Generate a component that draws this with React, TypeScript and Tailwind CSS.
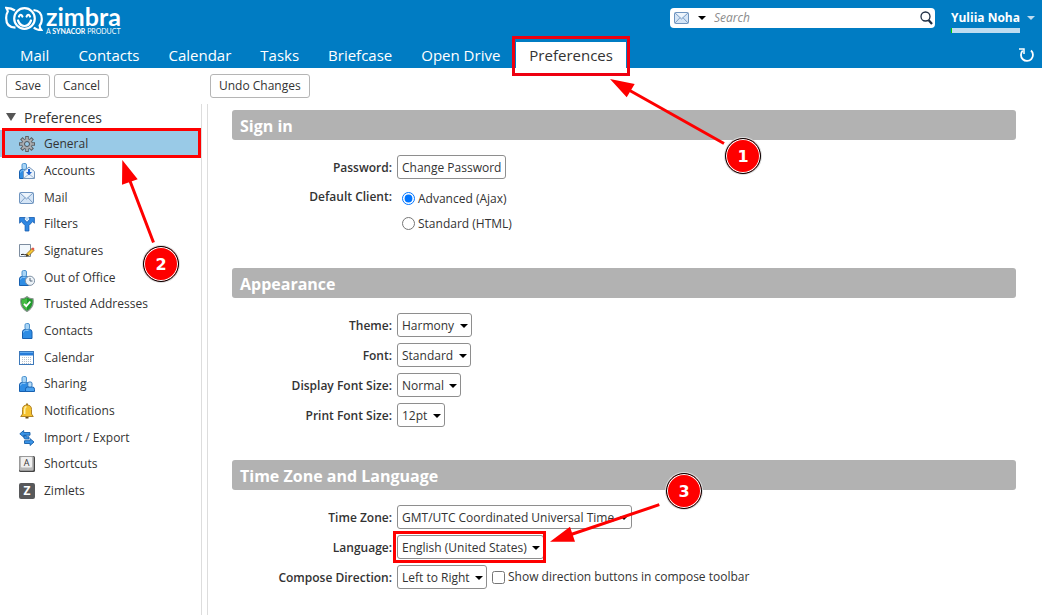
import type { ReactNode } from "react";

/* Icons ----------------------------------------------------------------- */

const iconBase = {
  viewBox: "0 0 16 16",
  className: "size-4 shrink-0",
  "aria-hidden": true,
};

const Caret = ({ className }: { className: string }) => (
  <svg viewBox="0 0 8 4" preserveAspectRatio="none" className={className} fill="currentColor" aria-hidden>
    <path d="M0 0h8L4 4Z" />
  </svg>
);

const Gear = () => (
  <svg {...iconBase}>
    <g stroke="#5d6166" strokeWidth="3.600">
      <path d="M8 0v16M0 8h16M2.300 2.300l11.400 11.400M13.700 2.300 2.300 13.700" />
    </g>
    <circle cx="8" cy="8" r="5.600" fill="#5d6166" />
    <g stroke="#b0b3b7" strokeWidth="1.700">
      <path d="M8 1v14M1 8h14M3.100 3.100l9.800 9.800M12.900 3.100l-9.800 9.800" />
    </g>
    <circle cx="8" cy="8" r="4.800" fill="#a9acb0" />
    <circle cx="8" cy="8" r="2.500" fill="#9acae7" stroke="#4f5358" />
  </svg>
);

const Person = ({ x = 0 }: { x?: number }) => (
  <g transform={`translate(${x} 0)`}>
    <path d="M.5 15.500V9q0-2.500 2.500-2.500h4.500Q10 6.500 10 9v6.500Z" fill="#2f8de4" stroke="#1760b0" />
    <path d="M1.500 9.500q0-2 2-2h3" fill="none" stroke="#82c1f7" />
    <rect x="3" y=".5" width="4.500" height="6" rx="1.500" fill="#a9d5f6" stroke="#4e94d0" />
  </g>
);

const Accounts = () => (
  <svg {...iconBase}>
    <Person />
    <path d="M4.500 8.500 10 4l5.500 4.500v7h-11Z" fill="#e9f2fb" stroke="#7596bb" />
    <path d="m5 15 5-4 5 4" fill="none" stroke="#9bb5d2" />
    <path d="M9 6h2v3h2l-3 3.300L7 9h2Z" fill="#1d62cf" />
  </svg>
);

const Envelope = () => (
  <svg {...iconBase}>
    <rect x=".5" y="2.500" width="14" height="11" rx="1" fill="#d5e5f6" stroke="#6f94bf" />
    <path d="m1 3 6.500 6L14 3M1 13l5-5.300M14 13 9 7.700" fill="none" stroke="#7d9fc6" />
    <path d="M2.200 3h10.600L7.500 7.800Z" fill="#eef5fc" />
  </svg>
);

const Filters = () => (
  <svg {...iconBase}>
    <path
      d="M.6 1.500h5.600L4.900 3 8 6.300 11.100 3 9.800 1.500h5.600v5.700L13.700 5.500 9.900 9.500V15H6.100V9.500L2.300 5.500.6 7.200Z"
      fill="#2f87e2"
      stroke="#145bae"
      strokeWidth=".8"
    />
    <path d="M8 .8 10 2.800 8 4.800 6 2.800Z" fill="#b5d8f7" />
  </svg>
);

const Signatures = () => (
  <svg {...iconBase}>
    <path d="M.5 1.500h11v12H.5Z" fill="#f2f8fd" stroke="#7d8da0" />
    <path d="M2 12q1.300-2 2 0 .8-1.500 1.500-.3h3" fill="none" stroke="#222" />
    <path d="m8 10.500 5-5 2 2-5 5-2.700.7Z" fill="#f6c935" stroke="#876116" strokeWidth=".8" />
    <path d="m12.300 5.700 1-1q.8-.5 1.600.3t.3 1.700l-1 1Z" fill="#e2574a" />
    <path d="m7 13.500 1-2.500 1.500 1.500Z" fill="#333" />
  </svg>
);

const OutOfOffice = () => (
  <svg {...iconBase}>
    <Person />
    <circle cx="11" cy="10.800" r="4.600" fill="#edf3f8" stroke="#8193a6" />
    <path d="M11 8v3h2.500" fill="none" stroke="#55677a" />
  </svg>
);

const Shield = () => (
  <svg {...iconBase}>
    <path d="M8 .6q2 2 6 2.200Q15.500 11 8 15.500.5 11 2 2.800 6 2.600 8 .6Z" fill="#1f9a2b" stroke="#8b9690" strokeWidth="1.200" />
    <path d="M8 2v12.500Q2 10.500 3 3.800 6 3.600 8 2Z" fill="#45bb43" />
    <path d="m5 7.800 2.300 2.400 4-4.700" fill="none" stroke="#fff" strokeWidth="1.900" />
  </svg>
);

const Contact = () => (
  <svg {...iconBase}>
    <Person x={3} />
  </svg>
);

const CalendarIcon = () => (
  <svg {...iconBase}>
    <rect x=".5" y="1.500" width="14" height="13" fill="#fff" stroke="#3c78ba" />
    <path d="M1 2h13v3.500H1Z" fill="#257bd9" />
    <path d="M1 2h13v1H1Z" fill="#61acf1" />
    <g stroke="#b8c2cc" strokeDasharray="1 1">
      <path d="M3 7.500h10M3 9.500h10M3 11.500h10M3 13.500h10" />
    </g>
  </svg>
);

const Sharing = () => (
  <svg {...iconBase}>
    <Person />
    <path d="M6.500 15.500v-2.200q0-2.300 2-2.300h5q2 0 2 2.300v2.200Z" fill="#4ba2ef" stroke="#1760b0" />
    <rect x="8.800" y="6" width="4.200" height="5" rx="1.500" fill="#b6dcf8" stroke="#3077bd" />
  </svg>
);

const Bell = () => (
  <svg {...iconBase}>
    <path d="M8 .5v2" stroke="#a47c25" strokeWidth="2" />
    <path d="M3.500 11V6.500q0-4.500 4.500-4.500t4.500 4.500V11l1.800 2.500H1.700Z" fill="#f4c12f" stroke="#a8791b" strokeWidth=".9" />
    <path d="M5.700 11V6.500q0-2.500 1.800-3" fill="none" stroke="#fff1a8" strokeWidth="1.500" />
    <path d="M6.500 14h3v1.500h-3Z" fill="#6b4c15" />
  </svg>
);

const ImportExport = () => (
  <svg {...iconBase}>
    <g fill="#3b95e8" stroke="#155da8" strokeWidth=".9">
      <path d="M5 5.500V7.800q0 1.200 1.200 1.200H10V6.800H7.200V5.500Z" />
      <path d="m.8 3.800 3.900-3.300v2h6.300v2.700H4.700v2Z" />
      <path d="m15 12-3.900 3.500v-2H5.500v-2.800h5.600v-2Z" />
    </g>
  </svg>
);

const Shortcuts = () => (
  <svg {...iconBase}>
    <rect width="16" height="16" rx="1.500" fill="#444" />
    <rect x=".5" y=".5" width="14" height="14" rx="1" fill="#b8b8b8" stroke="#9a9a9a" />
    <rect x="2" y="1" width="11" height="10.500" rx="1" fill="#f0f0f0" />
    <text x="7.500" y="9.500" textAnchor="middle" fontSize="9" fill="#333">A</text>
  </svg>
);

const Zimlets = () => (
  <svg {...iconBase}>
    <rect width="16" height="16" rx="2" fill="#58595b" />
    <text x="8" y="12" textAnchor="middle" fontSize="12" fontWeight="700" fill="#fff">Z</text>
  </svg>
);

const Smiley = () => (
  <svg viewBox="0 0 38 27" className="h-[27px] w-[38px]" fill="none" stroke="#fff" strokeWidth="2.200" aria-hidden>
    <circle cx="19.500" cy="12.500" r="10.300" />
    <path d="M10 4.500Q6.500 2 1.200 1.800q1.400 2 1.600 3.700Q1 8.500 1.200 12.500q0 9 9.300 9.200" />
    <path d="M28.500 4q8.300.8 8.300 9 0 4.500-2.200 6.500.2 2.500 1.700 4.500-5 0-7.500-2.500" />
    <path d="M13 14.500q2 5.500 6.500 5.500t6.500-5.500" strokeLinecap="round" />
    <path d="M14 10.500q1.700-3.500 3.400 0M21.600 10.500q1.700-3.500 3.400 0" strokeLinecap="round" />
  </svg>
);

/* Data ------------------------------------------------------------------ */

const tabs = ["Mail", "Contacts", "Calendar", "Tasks", "Briefcase", "Open Drive", "Preferences"];

const pages: { label: string; icon: () => ReactNode }[] = [
  { label: "General", icon: Gear },
  { label: "Accounts", icon: Accounts },
  { label: "Mail", icon: Envelope },
  { label: "Filters", icon: Filters },
  { label: "Signatures", icon: Signatures },
  { label: "Out of Office", icon: OutOfOffice },
  { label: "Trusted Addresses", icon: Shield },
  { label: "Contacts", icon: Contact },
  { label: "Calendar", icon: CalendarIcon },
  { label: "Sharing", icon: Sharing },
  { label: "Notifications", icon: Bell },
  { label: "Import / Export", icon: ImportExport },
  { label: "Shortcuts", icon: Shortcuts },
  { label: "Zimlets", icon: Zimlets },
];

/* Controls -------------------------------------------------------------- */

function ToolButton({ children }: { children: ReactNode }) {
  return (
    <button type="button" className="h-6 rounded-[3px] border border-[#b5b5b5] bg-white px-2">
      {children}
    </button>
  );
}

function Section({ title, children }: { title: string; children: ReactNode }) {
  return (
    <section>
      <h2 className="mb-3 flex h-[30px] items-center rounded-[3px] bg-[#b2b2b2] px-2 pt-0.5 text-[16px] font-bold text-white">
        {title}
      </h2>
      {children}
    </section>
  );
}

const rowClass = "flex h-[30px] items-center gap-[5px]";
const labelClass = "w-40 shrink-0 pt-0.5 text-right font-semibold";

type SelectRowProps = { id: string; label: string; value: string; children?: ReactNode };

function SelectRow({ id, label, value, children }: SelectRowProps) {
  return (
    <div className={rowClass}>
      <label htmlFor={id} className={labelClass}>
        {label}
      </label>
      <div className="relative flex">
        <select
          id={id}
          className="h-6 appearance-none rounded-[3px] border border-[#8e8e8e] bg-white pt-0.5 pr-4 pl-1"
        >
          <option>{value}</option>
        </select>
        <Caret className="pointer-events-none absolute top-[11px] right-1 h-1 w-2 text-black" />
      </div>
      {children}
    </div>
  );
}

/* Header ---------------------------------------------------------------- */

function Header() {
  return (
    <header className="flex h-[68px] flex-col justify-between bg-[#007cc3] text-white">
      <div className="flex items-start justify-between pr-[7px] pl-[5px]">
        <a href="#home" className="flex gap-[3px] pt-1.5" aria-label="Zimbra">
          <Smiley />
          <span className="flex flex-col font-['Lato',sans-serif]">
            <span className="text-[25px] leading-[20px] font-bold">zimbra</span>
            <span className="text-[7px] leading-[10px]">
              A <b>SYNACOR</b> PRODUCT
            </span>
          </span>
        </a>
        <div className="flex gap-4 pt-2">
          <form className="flex h-5 w-[265px] items-center rounded-[4px] bg-white pr-0.5 pl-1">
            <Envelope />
            <Caret className="ml-2 h-1 w-2 text-black" />
            <input
              type="search"
              aria-label="Search"
              placeholder="Search"
              className="ml-2 min-w-0 flex-1 text-[#333] outline-none placeholder:text-[#8c8c8c] placeholder:italic"
            />
            <button type="submit" aria-label="Run search">
              <svg viewBox="0 0 13 14" className="h-3.5 w-[13px]" fill="none" stroke="#1f2f45" aria-hidden>
                <circle cx="5.500" cy="5.500" r="4.500" strokeWidth="1.300" />
                <path d="m8.500 9 3.500 4" strokeWidth="2.200" />
              </svg>
            </button>
          </form>
          <button type="button" className="flex gap-[7px]">
            <span className="flex flex-col gap-px">
              <span className="leading-[19px] font-bold">Yuliia Noha</span>
              <span className="h-[5px] border-l border-[#00d000] bg-[#bfdcf0]" />
            </span>
            <Caret className="mt-2 h-1 w-2 text-[#bfdcf0]" />
          </button>
        </div>
      </div>
      <div className="flex items-center justify-between pr-[7px] pl-[7px]">
        <nav className="flex gap-[3px] text-[15px]">
          {tabs.map((tab) => (
            <a
              key={tab}
              href="#tab"
              className={`flex h-[26px] items-center px-[13px] ${tab === "Preferences" ? "bg-white text-[#333]" : ""}`}
            >
              {tab}
            </a>
          ))}
        </nav>
        <button type="button" aria-label="Refresh">
          <svg viewBox="0 0 16 16" className="size-4" fill="none" stroke="#fff" strokeWidth="1.800" aria-hidden>
            <path d="M3.700 3.700A6 6 0 1 0 12 3.500" />
            <path d="M0 2h5v5" strokeWidth="1.500" />
          </svg>
        </button>
      </div>
    </header>
  );
}

/* Callouts -------------------------------------------------------------- */

function Step({ className, children }: { className: string; children: ReactNode }) {
  return (
    <div
      className={`absolute flex size-9 items-center justify-center rounded-full border border-black bg-[#fe0000] pt-0.5 font-['DejaVu_Sans',sans-serif] text-base font-bold text-white ring-1 ring-[#ddd] inset-ring inset-ring-white ${className}`}
    >
      {children}
    </div>
  );
}

function Callouts() {
  return (
    <div className="pointer-events-none absolute inset-0 overflow-hidden">
      <div className="absolute top-[36px] left-[512px] h-10 w-[118px] border-3 border-[#ee0010]" />
      <div className="absolute top-[128px] left-[2px] h-[30px] w-[199px] border-3 border-[#fe0000]" />
      <div className="absolute top-[531px] left-[393px] h-8 w-[153px] border-3 border-[#fe0000]" />
      <svg className="absolute top-0 left-0 h-[615px] w-[1042px]" fill="#fe0000" stroke="#fe0000" aria-hidden>
        <path d="M628 89.500 724 143.500M130 181l23.500 61.500M571 534.500l88.300-29.800" strokeWidth="3" />
        <path d="m610 79 24.700 5-8 13.300ZM122.300 160l15.400 19.300-15.700 5.400ZM550 541.700l20-15 5 15Z" stroke="none" />
      </svg>
      <Step className="top-[138px] left-[725px]">1</Step>
      <Step className="top-[246px] left-[143px]">2</Step>
      <Step className="top-[473px] left-[666px]">3</Step>
    </div>
  );
}

/* Page ------------------------------------------------------------------ */

export default function App() {
  return (
    <div className="relative flex min-h-screen flex-col bg-white font-['Open_Sans','Noto_Sans',sans-serif] text-[12px] text-[#333]">
      <Header />

      <div className="flex h-9 items-center pl-1.5">
        <div className="flex w-[204px] gap-1">
          <ToolButton>Save</ToolButton>
          <ToolButton>Cancel</ToolButton>
        </div>
        <ToolButton>Undo Changes</ToolButton>
      </div>

      <div className="flex flex-1">
        <aside className="mr-[5px] w-[202px] shrink-0 border-r border-[#ddd]">
          <h2 className="flex h-[26px] items-center gap-2 pl-1.5 text-[14px]">
            <Caret className="h-2 w-2.5 text-[#555]" />
            Preferences
          </h2>
          <ul>
            {pages.map(({ label, icon: Icon }, i) => (
              <li key={label} className="h-[27px] nth-[3n]:h-[26px]">
                <a
                  href="#page"
                  className={`flex h-full items-center gap-[9px] pt-px pl-[19px] ${i === 0 ? "bg-[#99cae7]" : ""}`}
                >
                  <Icon />
                  {label}
                </a>
              </li>
            ))}
          </ul>
        </aside>

        <main className="flex flex-1 flex-col gap-[30px] border-l border-[#ddd] pt-1.5 pr-[26px] pl-6">
          <Section title="Sign in">
            <div className={rowClass}>
              <span className={labelClass}>Password:</span>
              <button type="button" className="h-6 rounded-[3px] border border-[#8e8e8e] bg-white px-1 pt-0.5">
                Change Password
              </button>
            </div>
            <div role="radiogroup" aria-labelledby="client" className="flex gap-[5px]">
              <span id="client" className={labelClass}>
                <span className="block pt-1">Default Client:</span>
              </span>
              <div className="flex flex-col pt-1 pb-0.5 pl-[5px]">
                <label className="flex h-[25px] items-center gap-[3px]">
                  <input type="radio" name="client" defaultChecked className="size-[13px] accent-[#0075ff]" />
                  Advanced (Ajax)
                </label>
                <label className="flex h-[25px] items-center gap-[3px]">
                  <input type="radio" name="client" className="size-[13px]" />
                  Standard (HTML)
                </label>
              </div>
            </div>
          </Section>

          <Section title="Appearance">
            <SelectRow id="theme" label="Theme:" value="Harmony" />
            <SelectRow id="font" label="Font:" value="Standard" />
            <SelectRow id="display-size" label="Display Font Size:" value="Normal" />
            <SelectRow id="print-size" label="Print Font Size:" value="12pt" />
          </Section>

          <Section title="Time Zone and Language">
            <SelectRow id="time-zone" label="Time Zone:" value="GMT/UTC Coordinated Universal Time" />
            <SelectRow id="language" label="Language:" value="English (United States)" />
            <SelectRow id="direction" label="Compose Direction:" value="Left to Right">
              <label className="flex items-center gap-[3px]">
                <input type="checkbox" className="size-[13px]" />
                Show direction buttons in compose toolbar
              </label>
            </SelectRow>
          </Section>
        </main>
      </div>

      <Callouts />
    </div>
  );
}
